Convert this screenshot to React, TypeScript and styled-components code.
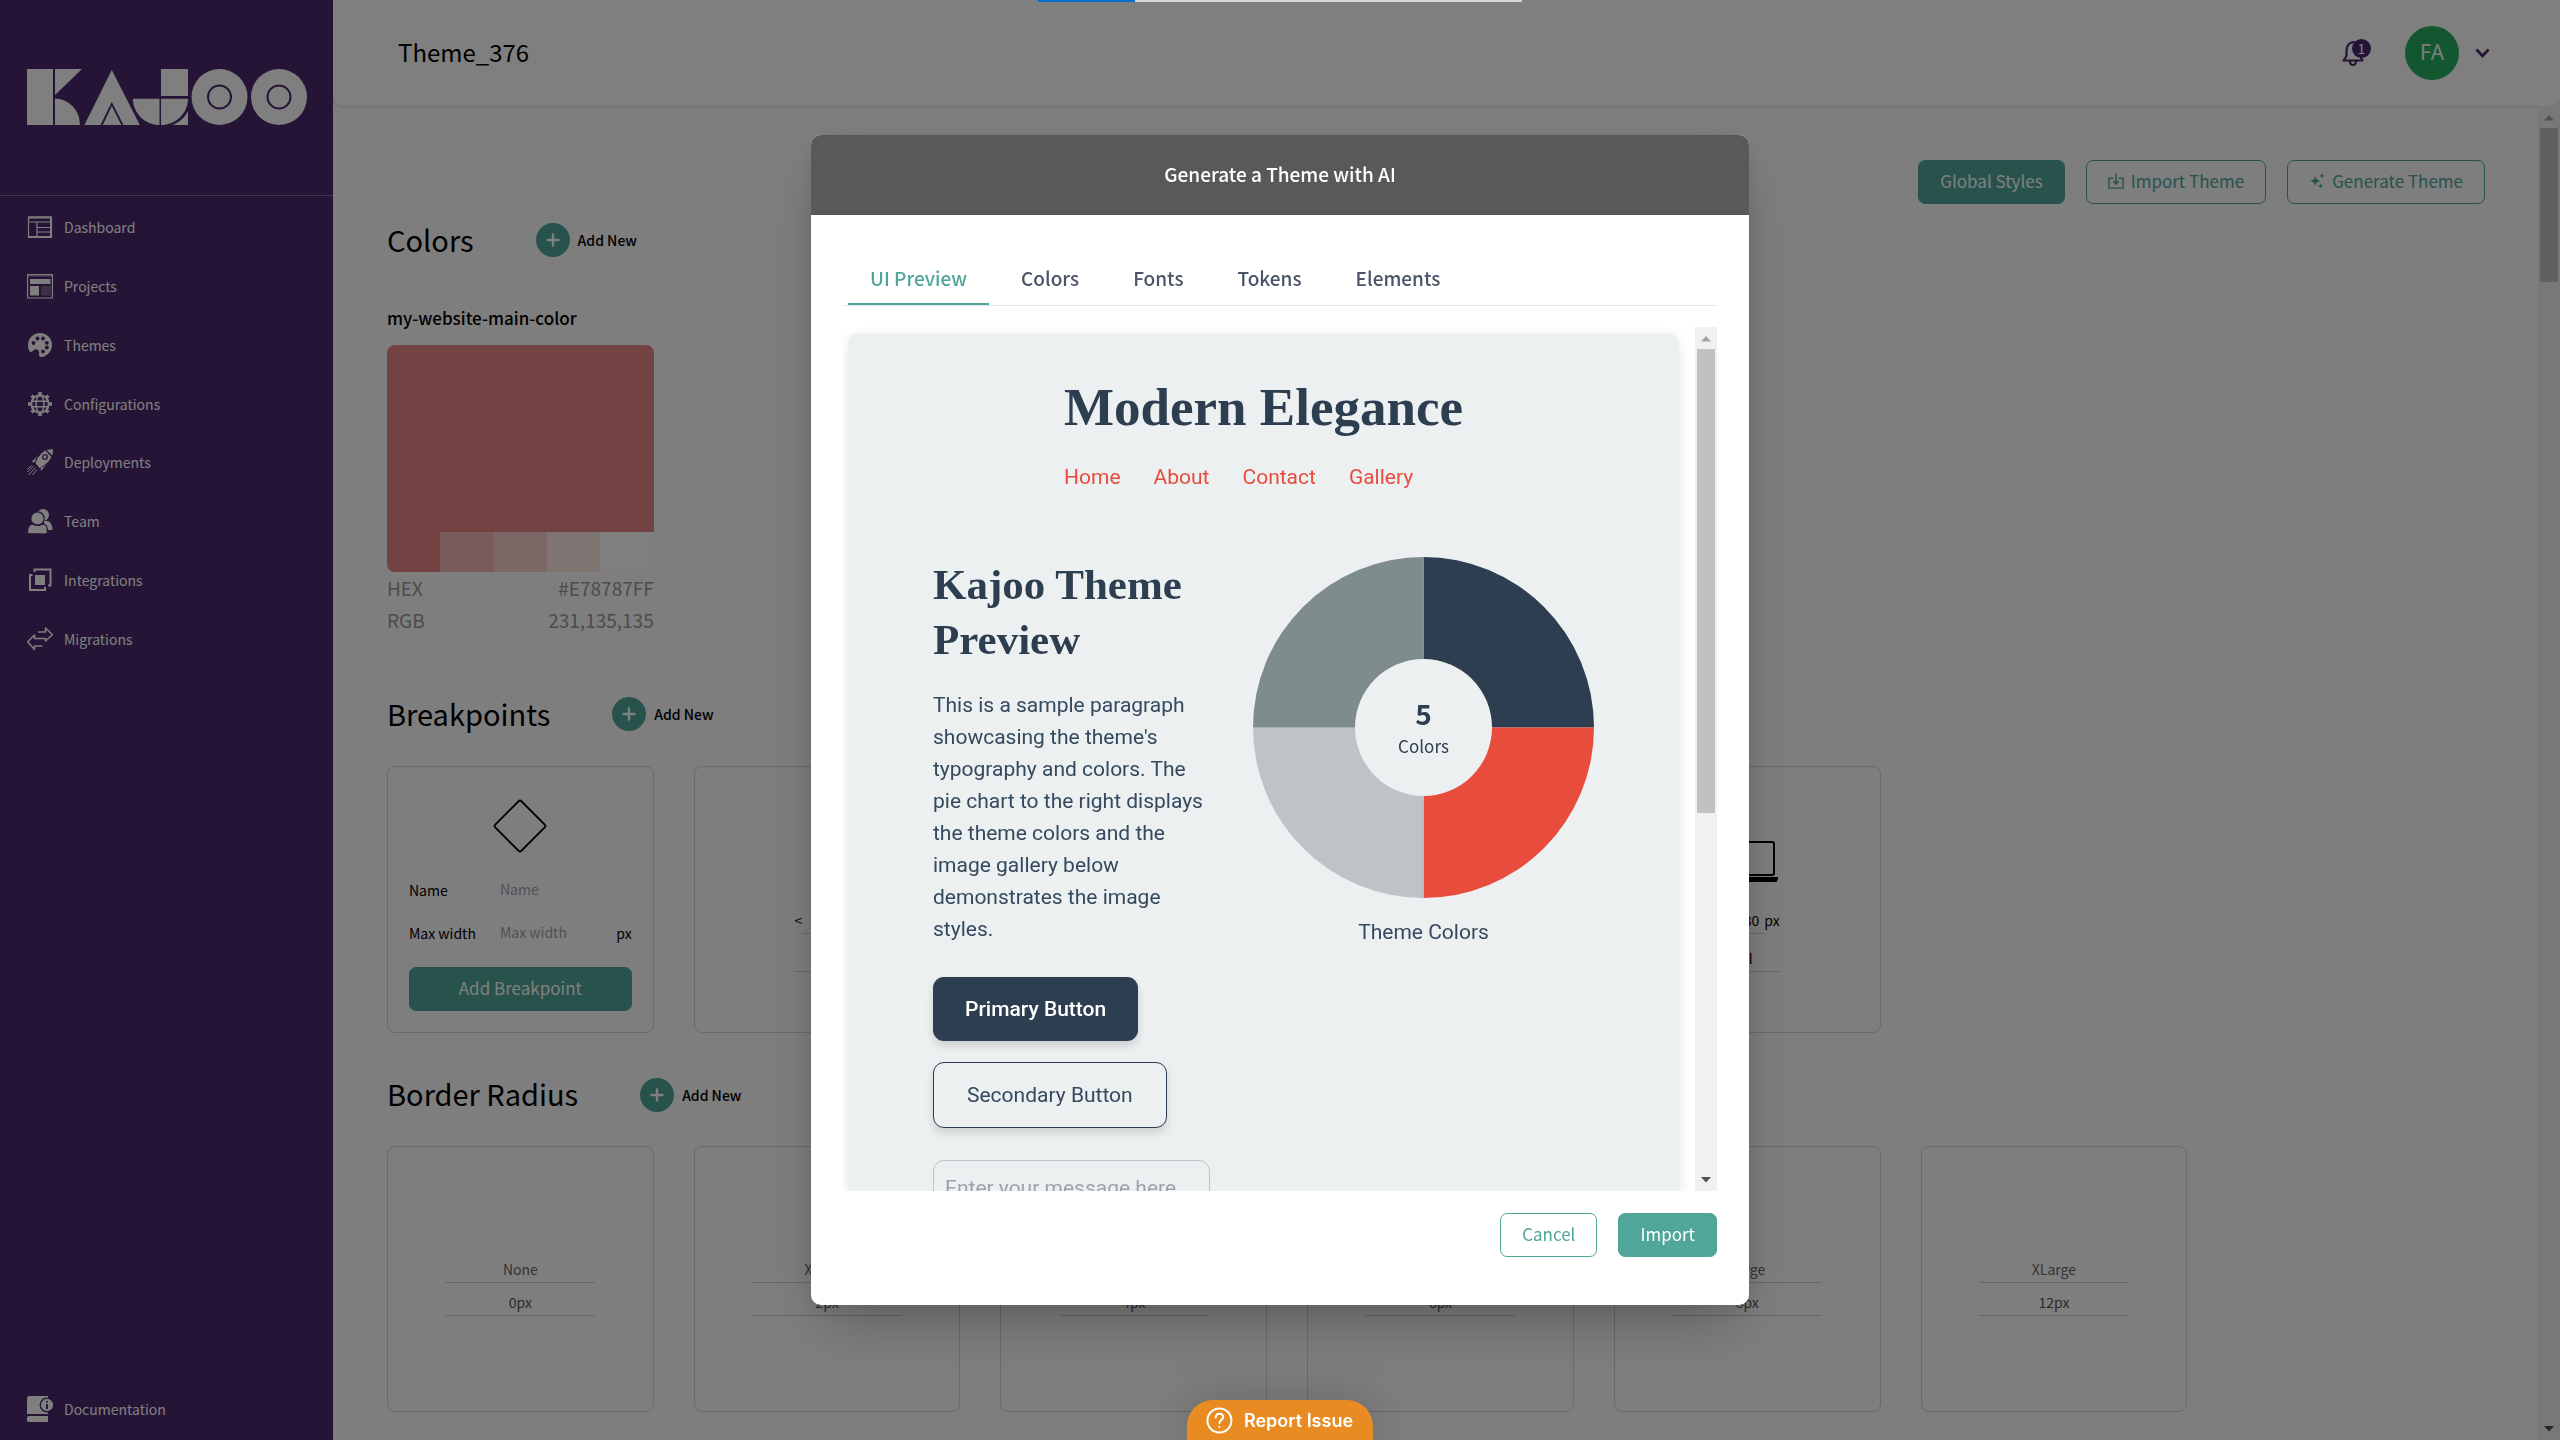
import React from 'react';
import styled, { createGlobalStyle, css } from 'styled-components';

const GlobalStyle = createGlobalStyle`
  *, *::before, *::after { box-sizing: border-box; }
  body {
    margin: 0;
    font-family: "Noto Sans CJK SC", "Noto Sans", sans-serif;
    color: #000;
    background: #fcfcfc;
  }
  button, input, textarea { font: inherit; color: inherit; margin: 0; }
  h1, h2, h3, p, ul, dl, dd { margin: 0; padding: 0; font-weight: 400; }
  ul { list-style: none; }
  a { color: inherit; text-decoration: none; }
`;

const green = '#50a699';
const purple = '#4b286d';
const navy = '#2c3e50';

/* ---------- page shell ---------- */

const Shell = styled.div`
  display: flex;
  height: 100vh;
  overflow: hidden;
`;

const Sidebar = styled.aside`
  display: flex;
  flex-direction: column;
  justify-content: space-between;
  flex: 0 0 333px;
  padding-bottom: 2px;
  background: ${purple};
  color: #fff;
`;

const LogoBox = styled.div`
  padding: 69px 26px 70px 27px;
  border-bottom: 1px solid #85669f;
  svg { display: block; width: 280px; height: 56px; }
`;

const NavList = styled.ul`
  display: grid;
  grid-auto-rows: 1fr;
  align-items: center;
  height: 470px;
  margin-top: 2px;
`;

const NavLink = styled.a`
  display: flex;
  align-items: center;
  gap: 11px;
  padding: 16px 27px;
  font-size: 14px;
  line-height: 26px;
  svg { flex: none; width: 26px; height: 26px; }
`;

const Page = styled.div`
  display: flex;
  flex-direction: column;
  flex: 1;
  min-width: 0;
`;

const TopBar = styled.header`
  display: flex;
  align-items: center;
  flex: 0 0 106px;
  padding: 0 70px 0 65px;
  background: #fff;
  border-radius: 0 0 10px 10px;
  box-shadow: 0 1px 3px rgba(0, 0, 0, 0.15);
`;

const PageTitle = styled.h1`
  flex: 1;
  padding-bottom: 2px;
  font-size: 24px;
  line-height: 32px;
`;

const BellButton = styled.button`
  position: relative;
  padding: 0;
  border: 0;
  background: none;
  width: 30px;
  height: 28px;
  margin-right: 33px;
  > svg { display: block; width: 24px; height: 28px; }
`;

const Badge = styled.span`
  position: absolute;
  top: 0;
  right: 1px;
  width: 19px;
  height: 19px;
  border-radius: 50%;
  background: ${purple};
  color: #fff;
  font-size: 14px;
  line-height: 18px;
  text-align: center;
`;

const Account = styled.button`
  display: flex;
  align-items: center;
  gap: 16px;
  padding: 0;
  border: 0;
  background: none;
  > svg { width: 15px; height: 12px; }
`;

const Avatar = styled.span`
  width: 54px;
  height: 54px;
  border-radius: 50%;
  background: #27ae60;
  color: #fff;
  font-family: "Open Sans", "Noto Sans", sans-serif;
  font-size: 21px;
  line-height: 53px;
  text-align: center;
`;

const Body = styled.div`
  display: flex;
  flex: 1;
  min-height: 0;
`;

const Content = styled.main`
  flex: 1;
  min-width: 0;
  overflow: hidden;
  padding: 54px 44px 0 54px;
`;

/* ---------- buttons ---------- */

const Button = styled.button<{ $outline?: boolean; $wide?: boolean }>`
  display: ${p => (p.$wide ? 'flex' : 'inline-flex')};
  align-items: center;
  justify-content: center;
  gap: 7px;
  width: ${p => (p.$wide ? '100%' : 'auto')};
  height: 44px;
  padding: 0 21px 2px;
  border: 1px solid ${green};
  border-radius: 7px;
  background: ${p => (p.$outline ? 'transparent' : green)};
  color: ${p => (p.$outline ? green : '#fff')};
  font-size: 17px;
  line-height: 24px;
  white-space: nowrap;
  ${p => p.$wide && css`margin-top: auto;`}
  svg { width: 16px; height: 16px; }
`;

const Actions = styled.div`
  display: flex;
  justify-content: flex-end;
  gap: 21px;
  padding-right: 9px;
  margin-bottom: 19px;
`;

/* ---------- theme sections ---------- */

const SectionHead = styled.div`
  display: flex;
  align-items: center;
  gap: 62px;
  height: 34px;
`;

const SectionTitle = styled.h2`
  padding-bottom: 3px;
  font-size: 29px;
  line-height: 34px;
`;

const AddNew = styled.button`
  display: flex;
  align-items: center;
  gap: 8px;
  padding: 0;
  border: 0;
  background: none;
  font-size: 14px;
  font-weight: 500;
  line-height: 24px;
`;

const PlusDot = styled.span`
  display: grid;
  place-items: center;
  width: 34px;
  height: 34px;
  border-radius: 50%;
  background: ${green};
  svg { width: 14px; height: 14px; }
`;

const Columns = styled.div<{ $top: number; $bottom: number }>`
  display: grid;
  grid-template-columns: repeat(7, minmax(0, 1fr));
  gap: 40px;
  padding: ${p => p.$top}px 0 ${p => p.$bottom}px;
`;

const ColorName = styled.h3`
  margin-bottom: 16px;
  font-size: 17px;
  font-weight: 500;
  line-height: 22px;
`;

const Swatch = styled.div`
  overflow: hidden;
  border-radius: 8px 8px 0 8px;
  background: #e78787;
  padding-top: 187px;
`;

const Shades = styled.div`
  display: flex;
  height: 40px;
`;

const Shade = styled.span<{ $color: string }>`
  flex: 1;
  background: ${p => p.$color};
`;

const ColorRow = styled.div`
  display: flex;
  justify-content: space-between;
  font-size: 19px;
  line-height: 32px;
  color: #999;
`;

const Card = styled.div`
  display: flex;
  flex-direction: column;
  aspect-ratio: 1;
  border: 1px solid #d5d5dd;
  border-radius: 8px;
  font-size: 14px;
`;

const FormCard = styled(Card)`
  padding: 31px 21px 21px;
  > svg { align-self: center; width: 56px; height: 56px; margin-bottom: 22px; }
`;

const Field = styled.div`
  display: flex;
  align-items: center;
  height: 27px;
  margin-bottom: 16px;
  label { flex: 0 0 84px; line-height: 24px; white-space: nowrap; }
`;

const TextInput = styled.input`
  flex: 1;
  min-width: 0;
  height: 27px;
  padding: 0 7px;
  border: 0;
  border-bottom: 1px solid #f4f4f7;
  background: none;
  &::placeholder { color: #a3a3ad; opacity: 1; }
`;

const InfoCard = styled(Card)`
  align-items: center;
  justify-content: flex-start;
  padding-top: 72px;
  > svg { width: 64px; height: 44px; margin-bottom: 23px; }
`;

const WidthRow = styled.div`
  display: flex;
  width: 65px;
  height: 28px;
  margin-bottom: 10px;
  line-height: 28px;
`;

const LineInput = styled.input`
  flex: 1;
  min-width: 0;
  height: 28px;
  padding: 0 5px 0 0;
  border: 0;
  border-bottom: 1px solid #cfcfd6;
  background: none;
  text-align: right;
`;

const NameInput = styled(LineInput)`
  flex: none;
  width: 65px;
  padding: 0;
  text-align: center;
`;

const RadiusCard = styled(Card)`
  align-items: center;
  padding-top: 111px;
  color: #6a6a6a;
`;

const RadiusLine = styled.div`
  display: flex;
  align-items: flex-end;
  justify-content: center;
  width: 150px;
  height: 33px;
  padding-bottom: 3px;
  border-bottom: 1px solid #cfcfd6;
  line-height: 20px;
  & + & { color: #555; }
  &:first-child { height: 25px; }
`;

/* ---------- scroll bars ---------- */

const Bar = styled.div`
  display: flex;
  flex-direction: column;
  align-items: center;
  flex: 0 0 22px;
  background: #f1f1f1;
  > svg { flex: none; width: 22px; height: 22px; }
`;

const Thumb = styled.div<{ $size: string }>`
  width: 18px;
  height: ${p => p.$size};
  margin-bottom: auto;
  background: #c1c1c1;
`;

const ScrollBar = ({ size }: { size: string }) => (
  <Bar aria-hidden="true">
    <svg viewBox="0 0 22 22"><path d="M6 14.5 11 9l5 5.5z" fill="#a3a3a3" /></svg>
    <Thumb $size={size} />
    <svg viewBox="0 0 22 22"><path d="M6 8h10l-5 5.5z" fill="#505050" /></svg>
  </Bar>
);

/* ---------- dialog ---------- */

const Backdrop = styled.div`
  position: fixed;
  inset: 0;
  display: flex;
  align-items: center;
  justify-content: center;
  background: rgba(0, 0, 0, 0.5);
`;

const Dialog = styled.section`
  display: flex;
  flex-direction: column;
  width: min(938px, 94vw);
  height: min(1170px, 94vh);
  overflow: hidden;
  border-radius: 10px;
  background: #fff;
  box-shadow: 0 27px 54px -12px rgba(0, 0, 0, 0.25), 0 4px 22px rgba(0, 0, 0, 0.08);
`;

const DialogHead = styled.header`
  flex: 0 0 80px;
  background: #58595b;
  color: #fff;
  text-align: center;
  h2 { font-size: 19px; font-weight: 500; line-height: 78px; }
`;

const DialogBody = styled.div`
  display: flex;
  flex-direction: column;
  flex: 1;
  min-height: 0;
  padding: 38px 32px 48px;
`;

const Tabs = styled.div`
  display: flex;
  gap: 10px;
  padding: 0 5px;
  margin-bottom: 21px;
  border-bottom: 1px solid #e2e6ea;
`;

const Tab = styled.button<{ $active?: boolean }>`
  height: 52px;
  padding: 0 22px;
  border: 0;
  border-bottom: 2px solid ${p => (p.$active ? green : 'transparent')};
  background: none;
  color: ${p => (p.$active ? green : '#4a5568')};
  font-size: 19px;
  font-weight: 500;
  line-height: 50px;
`;

const Scroller = styled.div`
  display: flex;
  flex: 1;
  min-height: 0;
`;

const Viewport = styled.div`
  flex: 1;
  min-width: 0;
  overflow: hidden;
  padding: 6px 16px 0 5px;
`;

const Preview = styled.article`
  padding: 44px 85px;
  border-radius: 11px;
  background: #ecf0f1;
  color: #34495e;
  font-family: Roboto, sans-serif;
  font-size: 21px;
  line-height: 32px;
  box-shadow: 0 4px 14px rgba(0, 0, 0, 0.1);
`;

const PreviewHead = styled.header`
  width: fit-content;
  margin: 0 auto 64px;
  h3 {
    margin-bottom: 24px;
    color: ${navy};
    font-family: "Liberation Serif", serif;
    font-size: 53px;
    font-weight: 700;
    line-height: 60px;
  }
`;

const PreviewNav = styled.nav`
  display: flex;
  gap: 33px;
  color: #e74c3c;
`;

const PreviewGrid = styled.div`
  display: grid;
  grid-template-columns: minmax(0, 1fr) auto;
  gap: 43px;
`;

const PreviewText = styled.div`
  display: flex;
  flex-direction: column;
  align-items: flex-start;
  h4 {
    margin: 0 0 22px;
    color: ${navy};
    font-family: "Liberation Serif", serif;
    font-size: 43px;
    font-weight: 700;
    line-height: 55px;
  }
  p { margin-bottom: 32px; }
`;

const PreviewButton = styled.button<{ $primary?: boolean }>`
  margin-bottom: ${p => (p.$primary ? 21 : 32)}px;
  padding: 16px ${p => (p.$primary ? 32 : 33)}px;
  border: ${p => (p.$primary ? '0' : `1px solid ${navy}`)};
  border-radius: 11px;
  background: ${p => (p.$primary ? navy : '#ecf0f1')};
  color: ${p => (p.$primary ? '#fff' : '#34495e')};
  font-weight: ${p => (p.$primary ? 500 : 400)};
  line-height: 32px;
  white-space: nowrap;
  box-shadow: 0 5px 8px rgba(0, 0, 0, 0.13);
`;

const Message = styled.textarea`
  display: block;
  width: 100%;
  height: 130px;
  padding: 11px;
  border: 1px solid #bdc3c7;
  border-radius: 11px;
  background: transparent;
  resize: none;
  &::placeholder { color: #9ca3af; opacity: 1; }
`;

const Chart = styled.figure`
  margin: 0;
  text-align: center;
`;

const Donut = styled.div`
  position: relative;
  display: grid;
  place-items: center;
  width: 341px;
  height: 341px;
  margin-bottom: 18px;
  > svg { position: absolute; inset: 0; }
`;

const DonutLabel = styled.div`
  position: relative;
  color: ${navy};
  font-family: "Noto Sans CJK SC", sans-serif;
  font-size: 17px;
  line-height: 30px;
  strong { display: block; font-size: 28px; font-weight: 700; line-height: 36px; }
`;

const DialogFoot = styled.footer`
  display: flex;
  justify-content: flex-end;
  gap: 21px;
  padding-top: 22px;
`;

const ReportButton = styled.button`
  position: fixed;
  bottom: 0;
  left: 50%;
  transform: translateX(-50%);
  display: flex;
  align-items: center;
  gap: 11px;
  height: 40px;
  padding: 0 20px 0 19px;
  border: 0;
  border-radius: 26px 26px 0 0;
  background: #e88b22;
  color: #fff;
  font-family: Inter, sans-serif;
  font-size: 18px;
  font-weight: 600;
  white-space: nowrap;
  box-shadow: 0 0 48px rgba(0, 0, 0, 0.2);
  svg { width: 27px; height: 27px; }
`;

const LoadingBar = styled.div`
  position: fixed;
  top: 0;
  left: 50%;
  width: 484px;
  height: 2px;
  margin-left: -242px;
  background: linear-gradient(to right, #0b6bcb 20%, #d4d4d4 20%);
`;

/* ---------- drawings ---------- */

const Logo = () => (
  <svg viewBox="0 0 280 56" fill="#fff" role="img" aria-label="Kajoo">
    <path d="M0 0h26v56H0zM28 0h27L28 26zM28 29.5C42 30 53 41 53 56H28z" />
    <path d="M84.800 1 112.800 56H96.500L84.800 33 73.500 56H57.400zM84.800 37l9.600 19H75.800z" />
    <path d="M134 0h27v27h-27zM106 29.700h26.500V56C118 56 106 44 106 29.700zM134 29.700h27C161 44 149 56 134 56zM161 42v14h-16c7-2.500 13-7.500 16-14z" />
    <circle cx="192.500" cy="28" r="28" />
    <circle cx="252" cy="28" r="28" />
    <g fill="none" stroke={purple} strokeWidth="2">
      <circle cx="192.500" cy="28" r="11.500" />
      <circle cx="252" cy="28" r="11.500" />
    </g>
  </svg>
);

const Plus = () => (
  <svg viewBox="0 0 14 14" stroke="#fff" strokeWidth="2.400" strokeLinecap="round">
    <path d="M7 1.500v11M1.500 7h11" />
  </svg>
);

const icons: Record<string, React.ReactNode> = {
  Dashboard: (
    <svg viewBox="0 0 26 26" fill="none" stroke="#fff" strokeWidth="1.200">
      <path d="M1.500 3h23v20.500h-23zM1.500 8H24M10 8v15.500M10 13.500h14M10 18h14" />
      <path d="M1.500 3.500h23M24 3v20.500M1.500 23h23" strokeWidth="2" />
    </svg>
  ),
  Projects: (
    <svg viewBox="0 0 26 26" fill="#fff">
      <path d="M.6 1.500h24.800v23.500H.6z" fill="none" stroke="#fff" strokeWidth="1.200" />
      <path d="M0 1h26v2.500H0z" opacity=".5" />
      <path d="M3 6h20.500v5H3zM3 13h9v9.500H3z" />
      <path d="M14 13h10v9.500H14z" opacity=".25" />
    </svg>
  ),
  Themes: (
    <svg viewBox="0 0 26 26">
      <path d="M13 1a12 12 0 0 1 12 12c0 6-4.500 11-10 12-2 .3-3.500-.8-3-2.700.6-2.300-.3-5-3.300-5-2.300 0-3.200 3-5.300 3C1.700 18.500 1 15.500 1 13A12 12 0 0 1 13 1z" fill="#fff" />
      <g fill={purple}>
        <circle cx="6.500" cy="11" r="1.900" /><circle cx="10.500" cy="6.500" r="1.900" />
        <circle cx="16" cy="6.500" r="1.900" /><circle cx="19.800" cy="10.800" r="1.900" />
        <circle cx="19.800" cy="15.500" r="1.900" /><circle cx="16" cy="19.500" r="1.900" />
      </g>
    </svg>
  ),
  Configurations: (
    <svg viewBox="0 0 26 26" fill="none" stroke="#fff" strokeWidth="1.500">
      <circle cx="13" cy="13" r="8.700" strokeWidth="2" />
      <ellipse cx="13" cy="13" rx="4" ry="8.500" />
      <path d="M5 10.300h16M5 15.700h16" />
      <path d="M13 1v3M13 22v3M1 13h3M22 13h3M4.600 4.600l2.200 2.200M19.200 19.200l2.200 2.200M4.600 21.400l2.200-2.200M19.200 6.800l2.200-2.200" strokeWidth="3.400" />
    </svg>
  ),
  Deployments: (
    <svg viewBox="0 0 26 26">
      <path d="M19.500 1 26 0l-.5 6.500zM18.300 1.600l6 6.100c-2 5-6.300 8.600-11.800 11.300L8.500 14C10.500 9 14 3.800 18.300 1.600zM10.500 7 4.500 13l3.200.3c.6-2.300 1.600-4.300 2.800-6.300zM19.500 15.500 14 22l-.5-3c2.300-.8 4.200-1.900 6-3.500z" fill="#fff" />
      <circle cx="18" cy="8" r="2.300" fill="none" stroke={purple} strokeWidth="1.300" />
      <path d="M6.500 17 .5 23M8.500 18.500 1.500 26M10 20.500 5.500 26M4.500 16.500.5 20.500" stroke="#fff" strokeWidth="1" />
    </svg>
  ),
  Team: (
    <svg viewBox="0 0 26 26" fill="#fff">
      <circle cx="16" cy="7" r="6" />
      <path d="M17 13h4c3 1 4.500 5 4.500 9h-8z" />
      <g stroke={purple} strokeWidth="1.200">
        <circle cx="10.500" cy="10.500" r="6.700" />
        <path d="M.5 25.500c0-5 1-9.500 5-9.500 3 1.800 7 1.800 10 0 4 0 5 4.500 5 7.500 0 1.500-1 2.500-2.500 2.500z" />
      </g>
    </svg>
  ),
  Integrations: (
    <svg viewBox="0 0 26 26" fill="none" stroke="#fff" strokeWidth="2">
      <path d="M7.500 5V2.500h16v16H21M5.500 8H3v15h15v-3" />
      <path d="M8 8h10v10H8z" fill="#fff" stroke="none" />
    </svg>
  ),
  Migrations: (
    <svg viewBox="0 0 26 26" fill="none" stroke="#fff" strokeWidth="1.500" strokeLinejoin="round">
      <path d="M11 6h7.500V2L25.500 8.700 18.500 15v-2.500H7.500V9L.7 15.700 7.500 23.500V20h8" />
    </svg>
  ),
  Documentation: (
    <svg viewBox="0 0 26 26" fill="#fff">
      <path d="M2.500 0H21v18H0V2.500A2.500 2.500 0 0 1 2.500 0zM2.500 20H21v6H2.500a3 3 0 0 1 0-6z" />
      <circle cx="20" cy="9" r="6.800" stroke={purple} strokeWidth="1.300" />
      <path d="M20 8v5M20 5v1.600" stroke={purple} strokeWidth="1.800" />
    </svg>
  ),
};

const Laptop = () => (
  <svg viewBox="0 0 64 44">
    <rect x="6" y="3" width="53" height="33" rx="2" fill="none" stroke="#000" strokeWidth="2" />
    <path d="M1 38h62v2l-1.500 3h-59L1 40z" />
  </svg>
);

const Handheld = ({ width }: { width: number }) => (
  <svg viewBox="0 0 64 44" fill="none" stroke="#000" strokeWidth="2">
    <rect x={32 - width / 2} y="1" width={width} height="42" rx="3" />
    <path d="M29 38h6" />
  </svg>
);

const navNames = ['Dashboard', 'Projects', 'Themes', 'Configurations', 'Deployments', 'Team', 'Integrations', 'Migrations'];
const breakpoints = [
  { name: 'sm', width: '640', icon: <Handheld width={22} /> },
  { name: 'md', width: '768', icon: <Handheld width={30} /> },
  { name: 'lg', width: '1024', icon: <Handheld width={34} /> },
  { name: 'xl', width: '1280', icon: <Laptop /> },
];
const radii = [['None', '0px'], ['XSmall', '2px'], ['Small', '4px'], ['Medium', '6px'], ['Large', '8px'], ['XLarge', '12px']];
const shades = ['#e78787', '#f3b7b7', '#f9cdcd', '#fde8e5', '#ffffff'];

const Head = ({ title }: { title: string }) => (
  <SectionHead>
    <SectionTitle>{title}</SectionTitle>
    <AddNew type="button"><PlusDot><Plus /></PlusDot>Add New</AddNew>
  </SectionHead>
);

export default function App() {
  return (
    <>
      <GlobalStyle />
      <Shell>
        <Sidebar>
          <div>
            <LogoBox><Logo /></LogoBox>
            <NavList>
              {navNames.map(name => (
                <li key={name}><NavLink href="#">{icons[name]}{name}</NavLink></li>
              ))}
            </NavList>
          </div>
          <NavLink href="#">{icons.Documentation}Documentation</NavLink>
        </Sidebar>

        <Page>
          <TopBar>
            <PageTitle>Theme_376</PageTitle>
            <BellButton type="button" aria-label="Notifications">
              <svg viewBox="0 0 24 28" fill="none" stroke={purple} strokeWidth="2.200" strokeLinecap="round" strokeLinejoin="round">
                <path d="M11 3C6.500 4 4.500 7.500 4.500 12v5L1.500 21.500h19L18 17v-5C18 7.500 15.500 4 11 3zM8 22c0 2.500 1.200 4 3 4s3-1.500 3-4" />
              </svg>
              <Badge>1</Badge>
            </BellButton>
            <Account type="button">
              <Avatar>FA</Avatar>
              <svg viewBox="0 0 15 12" fill="none" stroke={purple} strokeWidth="2.800"><path d="M1.500 2.500l6 6.500 6-6.500" /></svg>
            </Account>
          </TopBar>

          <Body>
            <Content>
              <Actions>
                <Button type="button">Global Styles</Button>
                <Button type="button" $outline>
                  <svg viewBox="0 0 18 18" fill="none" stroke={green} strokeWidth="1.600">
                    <path d="M6 6H1v11h16V6h-5M9 0v12M6 9l3 3.500L12 9" />
                  </svg>
                  Import Theme
                </Button>
                <Button type="button" $outline>
                  <svg viewBox="0 0 18 18" fill={green}>
                    <path d="M7 3.500c.8 3.500 2 4.700 6 5.500-4 .8-5.200 2-6 6-.8-4-2-5.200-6-6 4-.8 5.200-2 6-5.500zM14.500 0c.4 2 1 2.600 3.500 3.200-2.500.5-3.100 1.200-3.500 3.400-.4-2.200-1-2.900-3-3.400 2-.6 2.600-1.200 3-3.200zM13 11.500c.4 2 1 2.500 3 3-2 .5-2.600 1.200-3 3.200-.4-2-1-2.700-3-3.200 2-.5 2.600-1 3-3z" />
                  </svg>
                  Generate Theme
                </Button>
              </Actions>

              <Head title="Colors" />
              <Columns $top={50} $bottom={61}>
                <div>
                  <ColorName>my-website-main-color</ColorName>
                  <Swatch>
                    <Shades>{shades.map(c => <Shade key={c} $color={c} />)}</Shades>
                  </Swatch>
                  <ColorRow><span>HEX</span><span>#E78787FF</span></ColorRow>
                  <ColorRow><span>RGB</span><span>231,135,135</span></ColorRow>
                </div>
              </Columns>

              <Head title="Breakpoints" />
              <Columns $top={35} $bottom={45}>
                <FormCard>
                  <svg viewBox="0 0 56 56" fill="none" stroke="#000" strokeWidth="1.800">
                    <rect x="9.500" y="9.500" width="37" height="37" rx="2" transform="rotate(45 28 28)" />
                  </svg>
                  <Field>
                    <label htmlFor="bp-name">Name</label>
                    <TextInput id="bp-name" placeholder="Name" />
                  </Field>
                  <Field>
                    <label htmlFor="bp-width">Max width</label>
                    <TextInput id="bp-width" placeholder="Max width" />
                    px
                  </Field>
                  <Button type="button" $wide>Add Breakpoint</Button>
                </FormCard>
                {breakpoints.map(({ name, width, icon }) => (
                  <InfoCard key={name}>
                    {icon}
                    <WidthRow>
                      &lt;
                      <LineInput aria-label={`${name} width`} defaultValue={width} />
                      px
                    </WidthRow>
                    <NameInput aria-label={`${name} name`} defaultValue={name} />
                  </InfoCard>
                ))}
              </Columns>

              <Head title="Border Radius" />
              <Columns $top={34} $bottom={45}>
                {radii.map(([name, size]) => (
                  <RadiusCard key={name}>
                    <RadiusLine>{name}</RadiusLine>
                    <RadiusLine>{size}</RadiusLine>
                  </RadiusCard>
                ))}
              </Columns>
            </Content>
            <ScrollBar size="154px" />
          </Body>
        </Page>
      </Shell>

      <Backdrop>
        <Dialog role="dialog" aria-modal="true" aria-labelledby="dialog-title">
          <DialogHead><h2 id="dialog-title">Generate a Theme with AI</h2></DialogHead>
          <DialogBody>
            <Tabs role="tablist">
              <Tab type="button" role="tab" aria-selected="true" $active>UI Preview</Tab>
              <Tab type="button" role="tab">Colors</Tab>
              <Tab type="button" role="tab">Fonts</Tab>
              <Tab type="button" role="tab">Tokens</Tab>
              <Tab type="button" role="tab">Elements</Tab>
            </Tabs>
            <Scroller>
              <Viewport>
                <Preview>
                  <PreviewHead>
                    <h3>Modern Elegance</h3>
                    <PreviewNav>
                      <a href="#">Home</a>
                      <a href="#">About</a>
                      <a href="#">Contact</a>
                      <a href="#">Gallery</a>
                    </PreviewNav>
                  </PreviewHead>
                  <PreviewGrid>
                    <PreviewText>
                      <h4>Kajoo Theme Preview</h4>
                      <p>
                        This is a sample paragraph showcasing the theme's typography and colors. The pie
                        chart to the right displays the theme colors and the image gallery below
                        demonstrates the image styles.
                      </p>
                      <PreviewButton type="button" $primary>Primary Button</PreviewButton>
                      <PreviewButton type="button">Secondary Button</PreviewButton>
                      <Message aria-label="Message" placeholder="Enter your message here" />
                    </PreviewText>
                    <Chart>
                      <Donut>
                        <svg viewBox="0 0 341 341">
                          <path d="M170.500 0A170.500 170.500 0 0 1 341 170.500H170.500z" fill={navy} />
                          <path d="M341 170.500A170.500 170.500 0 0 1 170.500 341V170.500z" fill="#e74c3c" />
                          <path d="M170.500 341A170.500 170.500 0 0 1 0 170.500h170.500z" fill="#bdc3c7" />
                          <path d="M0 170.500A170.500 170.500 0 0 1 170.500 0v170.500z" fill="#7f8c8d" />
                          <circle cx="170.500" cy="170.500" r="68.500" fill="#ecf0f1" />
                        </svg>
                        <DonutLabel><strong>5</strong>Colors</DonutLabel>
                      </Donut>
                      <figcaption>Theme Colors</figcaption>
                    </Chart>
                  </PreviewGrid>
                </Preview>
              </Viewport>
              <ScrollBar size="464px" />
            </Scroller>
            <DialogFoot>
              <Button type="button" $outline>Cancel</Button>
              <Button type="button">Import</Button>
            </DialogFoot>
          </DialogBody>
        </Dialog>
      </Backdrop>

      <ReportButton type="button">
        <svg viewBox="0 0 27 27" fill="none" stroke="#fff" strokeWidth="2" strokeLinecap="round">
          <circle cx="13.500" cy="13.500" r="12" />
          <path d="M9.800 10.500c0-2.300 1.600-3.700 3.700-3.700s3.700 1.400 3.700 3.500c0 2.500-3.700 2.700-3.700 5.700M13.500 19.700v.3" />
        </svg>
        Report Issue
      </ReportButton>
      <LoadingBar />
    </>
  );
}
